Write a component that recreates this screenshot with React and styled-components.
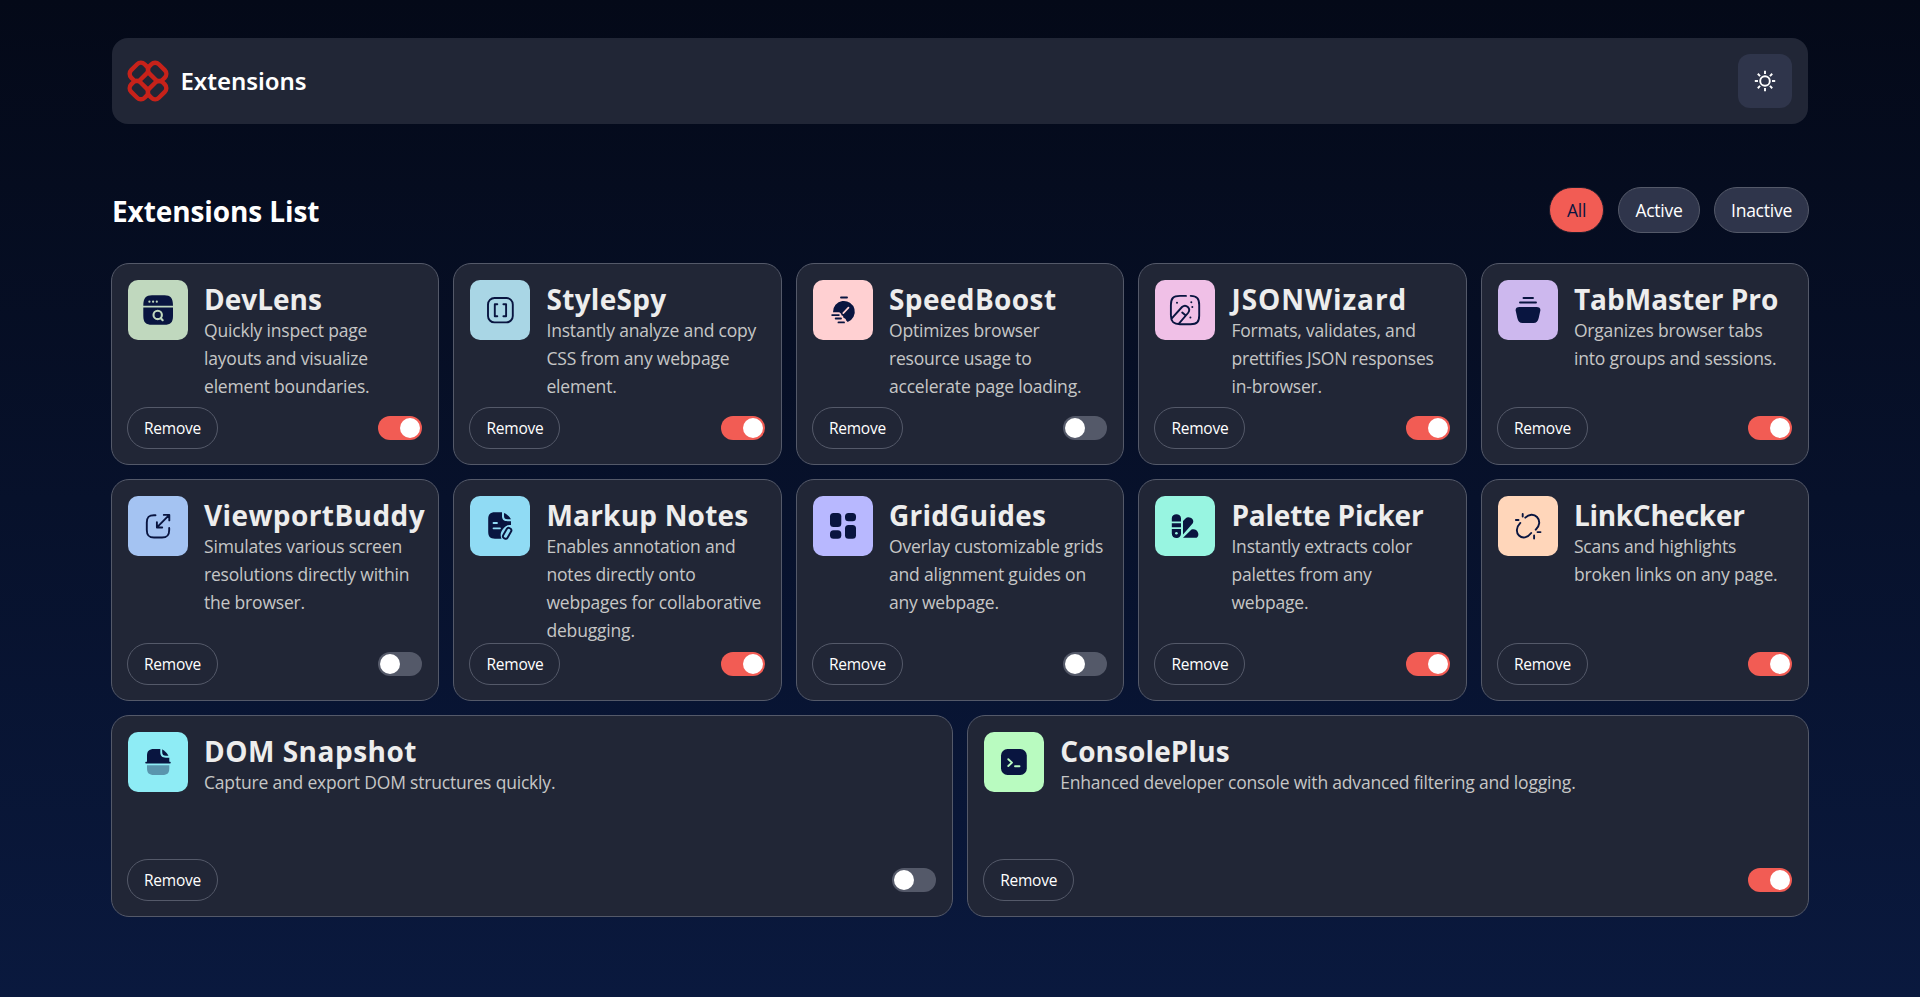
import React, { useState } from "react";
import styled, { createGlobalStyle } from "styled-components";

const NAVY = "#091540";

const GlobalStyle = createGlobalStyle`
  * { box-sizing: border-box; margin: 0; padding: 0; }
  body {
    min-height: 997px;
    background: linear-gradient(180deg, #040918 0%, #0a193e 100%);
    font-family: "Segoe UI", "Open Sans", "Noto Sans", sans-serif;
    color: #fff;
  }
`;

const Page = styled.main`
  min-height: 997px;
  padding: 38px 111px 0;
`;

const Header = styled.header`
  display: flex;
  align-items: center;
  justify-content: space-between;
  height: 86px;
  margin: 0 1px;
  padding: 16px;
  border-radius: 16px;
  background: #212636;
`;

const Brand = styled.div`
  display: flex;
  align-items: center;
  gap: 12px;
`;

const BrandName = styled.span`
  font: 600 24px/40px "Noto Sans", sans-serif;
  letter-spacing: -0.05px;
`;

const ThemeButton = styled.button`
  display: grid;
  place-items: center;
  width: 54px;
  height: 54px;
  border: 0;
  border-radius: 12px;
  background: #2f354b;
`;

const Toolbar = styled.section`
  display: flex;
  align-items: center;
  justify-content: space-between;
  height: 46px;
  margin: 63px 0 30px;
`;

const PageTitle = styled.h1`
  padding: 2px 0 0 1px;
  font-size: 28px;
  line-height: 46px;
  font-weight: 700;
  letter-spacing: -0.1px;
  white-space: nowrap;
`;

const Filters = styled.div`
  display: flex;
  align-items: center;
  gap: 14px;
`;

const FilterButton = styled.button`
  width: ${(p) => p.$width}px;
  height: 46px;
  border: 1px solid ${(p) => (p.$selected ? "#1d1c2c" : "#545969")};
  border-radius: 23px;
  background: ${(p) => (p.$selected ? "#f25c54" : "#2f354b")};
  color: ${(p) => (p.$selected ? NAVY : "#fff")};
  font-family: inherit;
  font-size: 17.5px;
  letter-spacing: -0.25px;
`;

const Grid = styled.section`
  display: grid;
  grid-template-columns: repeat(10, minmax(0, 1fr));
  grid-template-rows: 202px 222px 202px;
  gap: 14px 14.4px;
`;

const Card = styled.article`
  grid-column: span ${(p) => (p.$wide ? 5 : 2)};
  display: flex;
  flex-direction: column;
  justify-content: space-between;
  padding: 16px 16px 15px;
  border: 1px solid #545969;
  border-radius: 18px;
  background: #212636;
`;

const CardBody = styled.div`
  display: flex;
  gap: 16px;
  height: 126px;
`;

const IconTile = styled.svg`
  flex: none;
  width: 60px;
  height: 60px;
  border-radius: 10px;
  background: ${(p) => p.$color};
`;

const CardTitle = styled.h2`
  height: 36px;
  font-size: 28px;
  line-height: 38px;
  font-weight: 700;
  letter-spacing: ${(p) => p.$tracking}px;
  color: #ededed;
  white-space: nowrap;
`;

const Description = styled.p`
  font-size: 17.5px;
  line-height: 28px;
  letter-spacing: -0.19px;
  color: #c6c6c6;
  white-space: pre;
`;

const CardFooter = styled.div`
  display: flex;
  align-items: center;
  justify-content: space-between;
  height: 42px;
  margin-left: -1px;
`;

const RemoveButton = styled.button`
  width: 91px;
  height: 42px;
  border: 1px solid #545969;
  border-radius: 21px;
  background: transparent;
  color: #fff;
  font-family: inherit;
  font-size: 15.5px;
  letter-spacing: -0.25px;
`;

const Switch = styled.button`
  display: flex;
  align-items: center;
  justify-content: ${(p) => (p.$on ? "flex-end" : "flex-start")};
  width: 44px;
  height: 24px;
  padding: 2px;
  border: 0;
  border-radius: 12px;
  background: ${(p) => (p.$on ? "#f25c54" : "#545969")};
`;

const Knob = styled.span`
  width: 20px;
  height: 20px;
  border-radius: 50%;
  background: #fff;
`;

const LogoMark = styled.svg`
  flex: none;
  width: 42px;
  height: 42px;
  margin: 0 -0.5px 0 -1px;
`;

const Logo = () => (
  <LogoMark viewBox="0 0 40 40" fill="none" stroke="#c7221a" strokeWidth="4.2">
    {[0, 90, 180, 270].map((a) => (
      <g key={a} transform={`rotate(${a} 20 20)`}>
        <rect x="2.3" y="5" width="18" height="12.6" rx="5" transform="rotate(-45 11.3 11.3)" />
      </g>
    ))}
  </LogoMark>
);

const Sun = () => (
  <svg width="22" height="22" viewBox="-11 -11 22 22" fill="none" stroke="#fff" strokeWidth="1.9">
    <circle r="4.8" />
    {[0, 45, 90, 135, 180, 225, 270, 315].map((a) => (
      <path key={a} d="M0 -7V-10.2" transform={`rotate(${a})`} />
    ))}
  </svg>
);

const line = { fill: "none", stroke: NAVY, strokeWidth: 1.9, strokeLinecap: "round", strokeLinejoin: "round" };

const extensions = [
  {
    name: "DevLens", tracking: 0, text: "Quickly inspect page\nlayouts and visualize\nelement boundaries.", color: "#c0d8be", on: true,
    icon: (
      <>
        <path fill={NAVY} d="M15.3 25.7C15.3 18 18 15.2 24 15.2h12.5c6 0 8.5 2.8 8.5 10.5zM15.3 27.4H45V36c0 6.5-2.5 8.8-8.5 8.8H24c-6 0-8.7-2.3-8.7-8.8z" />
        <g fill="#c0d8be"><circle cx="21.4" cy="21.7" r="1.1" /><circle cx="25.1" cy="21.7" r="1.1" /><circle cx="28.8" cy="21.7" r="1.1" /></g>
        <g fill="none" stroke="#c0d8be" strokeWidth="2.1" strokeLinecap="round"><circle cx="29.7" cy="34.9" r="4.2" /><path d="M32.8 38.2L34.7 40.2" /></g>
      </>
    ),
  },
  {
    name: "StyleSpy", tracking: 0.3, text: "Instantly analyze and copy\nCSS from any webpage\nelement.", color: "#a9d6e5", on: true,
    icon: (
      <g {...line}>
        <rect x="18" y="18" width="24.8" height="24.4" rx="6.5" />
        <path d="M27.3 24.3H24.8V36.3H27.3M33.4 24.3H36.1V36.3H33.4" />
      </g>
    ),
  },
  {
    name: "SpeedBoost", tracking: 0.4, text: "Optimizes browser\nresource usage to\naccelerate page loading.", color: "#ffd0d2", on: false,
    icon: (
      <>
        <path fill={NAVY} d="M20 32.2A10.9 10.9 0 1 1 34.7 42L33 40.2C33 39 32 38 30.6 38C30.5 36.5 29.5 35.5 28.5 35.3C28.5 33.5 27 32.2 25.8 32.2z" />
        <path d="M30.3 33.2L35.5 27.7" stroke="#ffd0d2" strokeWidth="1.7" strokeLinecap="round" />
        <path {...line} d="M28 17.5H34M19.2 35.1H25.8M22.7 38.5H28M25.5 42.4H31" />
      </>
    ),
  },
  {
    name: "JSONWizard", tracking: 0.95, text: "Formats, validates, and\nprettifies JSON responses\nin-browser.", color: "#f0c0e7", on: true,
    icon: (
      <>
        <g {...line}>
          <path d="M31 15.9H25C18 15.9 15.9 18.5 15.9 25V35.5C15.9 42 18.5 44.2 25 44.2H35.5C42 44.2 44.2 42 44.2 35.5V25C44.2 18.5 42 16.2 35.7 15.9" />
          <path d="M16.8 38.3L27 27C31 23.5 36.5 28.5 33 33L23.7 43.8M27.2 32.5L30.5 35.3" />
        </g>
        <g fill={NAVY}><circle cx="22" cy="22.7" r="1" /><circle cx="36.3" cy="22.3" r="1" /><circle cx="37.3" cy="27" r="1" /><circle cx="35.4" cy="37.4" r="1" /></g>
      </>
    ),
  },
  {
    name: "TabMaster Pro", tracking: 0, text: "Organizes browser tabs\ninto groups and sessions.", color: "#cdb8ee", on: true,
    icon: (
      <>
        <path {...line} d="M25.5 18H35M22 22.5H38" />
        <path fill={NAVY} d="M21.5 27H38.5C41.5 27 42.7 28.3 42.3 30.8L40.7 38C39.8 41.5 38.5 43 35.5 43H24.5C21.5 43 20.2 41.5 19.3 38L17.7 30.8C17.3 28.3 18.5 27 21.5 27z" />
      </>
    ),
  },
  {
    name: "ViewportBuddy", tracking: 0.4, text: "Simulates various screen\nresolutions directly within\nthe browser.", color: "#a4c3f2", on: false,
    icon: (
      <g {...line}>
        <path d="M27.5 19.2H26C20.5 19.2 18.8 21.5 18.8 26.5V34C18.8 39.5 20.8 41.5 26 41.5H34C39.2 41.5 41.2 39.5 41.2 34V32" />
        <path d="M29.2 31.2L41.3 18.9M35.8 18.9H41.3V24.4M28.9 26.2V31.5H34.2" />
      </g>
    ),
  },
  {
    name: "Markup Notes", tracking: 0.2, text: "Enables annotation and\nnotes directly onto\nwebpages for collaborative\ndebugging.", color: "#90dbf4", on: true,
    icon: (
      <>
        <path fill={NAVY} d="M25 16.2H32V20C32 23.5 34 25.2 37.5 25.2H41V29C37 28.5 35 30.5 33 33C30.5 36 30 39.5 31.5 42.7H25C20 42.7 18.2 40.5 18.2 35.5V23.5C18.2 18.5 20 16.2 25 16.2z" />
        <path fill={NAVY} d="M34 17V20C34 22.3 35 23.3 37.5 23.3H41C39.5 20.5 37 18.2 34 17z" />
        <path stroke="#90dbf4" strokeWidth="1.8" strokeLinecap="round" d="M23.5 27H27M23.5 32.3H30" />
        <rect {...line} x="34.7" y="31.6" width="5" height="11.5" rx="2.2" transform="rotate(30 37.2 37.2)" />
      </>
    ),
  },
  {
    name: "GridGuides", tracking: 0.25, text: "Overlay customizable grids\nand alignment guides on\nany webpage.", color: "#b8b8ff", on: false,
    icon: (
      <g fill={NAVY}>
        <rect x="17" y="17" width="11.3" height="14" rx="3.5" /><rect x="32" y="17" width="11" height="8.3" rx="3.5" />
        <rect x="17" y="34.3" width="11.3" height="8.5" rx="3.5" /><rect x="32" y="29" width="11" height="13.8" rx="3.5" />
      </g>
    ),
  },
  {
    name: "Palette Picker", tracking: -0.2, text: "Instantly extracts color\npalettes from any\nwebpage.", color: "#98f5e1", on: true,
    icon: (
      <g fill={NAVY}>
        <path d="M16.8 25.5V22.3C16.8 16.8 26 16.8 26 22.3V25.5zM16.8 27.2H26V31.2H16.8zM16.8 33H26V37.4C26 43.5 16.8 43.5 16.8 37.4z" />
        <path d="M28 38.5V25L30.5 22.5C33.5 19.3 40.3 23.3 37.8 27.3zM28 41.7L36.5 33.5C41.5 31.5 45.5 38 42.2 41.2Q41.5 41.8 40.5 41.7z" />
        <circle cx="21.4" cy="37.3" r="1.3" fill="#98f5e1" />
      </g>
    ),
  },
  {
    name: "LinkChecker", tracking: -0.3, text: "Scans and highlights\nbroken links on any page.", color: "#ffd6ba", on: true,
    icon: (
      <g {...line}>
        <path d="M27.3 21.7C31 18 36 17.8 39 21C42.4 24.6 41.8 30 37.7 33.7M22.3 26.9C18 31.5 18 36.5 21 39.5C24.5 42.9 29.5 42 33.2 37" />
        <path d="M24.7 18V20.5M17.9 24H20.5M39.5 36.1H42.5M36.1 39.5V42.5" />
      </g>
    ),
  },
  {
    name: "DOM Snapshot", tracking: 0.5, text: "Capture and export DOM structures quickly.", color: "#8eecf5", on: false, wide: true,
    icon: (
      <g fill={NAVY}>
        <path d="M18 29.8H19V24C19 19 21 17 26 17H32.3V20C32.3 24 34 25.7 38 25.7H41.3V29.8H42C43 29.8 43 31.5 42 31.5H18C17 31.5 17 29.8 18 29.8z" />
        <path d="M34.2 17.2V20C34.2 22.7 35.3 23.8 38 23.8H40.5C39 21 36.5 18.5 34.2 17.2z" />
        <path opacity=".4" d="M19 33.3H41.3V36C41.3 41 39.5 43 34.5 43H26C21 43 19 41 19 36z" />
      </g>
    ),
  },
  {
    name: "ConsolePlus", tracking: 0.1, text: "Enhanced developer console with advanced filtering and logging.", color: "#b9fbc0", on: true, wide: true,
    icon: (
      <>
        <rect x="17" y="17" width="25.8" height="26" rx="6.5" fill={NAVY} />
        <path d="M24.3 27.2L28 30.6L24.3 34M31 34.3H35.5" fill="none" stroke="#b9fbc0" strokeWidth="1.9" strokeLinecap="round" strokeLinejoin="round" />
      </>
    ),
  },
];

const filters = [["All", 55], ["Active", 82], ["Inactive", 95]];

function ExtensionCard({ item, on, onToggle }) {
  return (
    <Card $wide={item.wide}>
      <CardBody>
        <IconTile viewBox="0 0 60 60" $color={item.color}>{item.icon}</IconTile>
        <div>
          <CardTitle $tracking={item.tracking}>{item.name}</CardTitle>
          <Description>{item.text}</Description>
        </div>
      </CardBody>
      <CardFooter>
        <RemoveButton>Remove</RemoveButton>
        <Switch $on={on} onClick={onToggle} role="switch" aria-checked={on}><Knob /></Switch>
      </CardFooter>
    </Card>
  );
}

export default function App() {
  const [filter, setFilter] = useState("All");
  const [active, setActive] = useState(() => extensions.map((e) => e.on));
  return (
    <Page>
      <GlobalStyle />
      <Header>
        <Brand><Logo /><BrandName>Extensions</BrandName></Brand>
        <ThemeButton><Sun /></ThemeButton>
      </Header>
      <Toolbar>
        <PageTitle>Extensions List</PageTitle>
        <Filters>
          {filters.map(([name, width]) => (
            <FilterButton key={name} $width={width} $selected={filter === name} onClick={() => setFilter(name)}>{name}</FilterButton>
          ))}
        </Filters>
      </Toolbar>
      <Grid>
        {extensions.map((item, i) =>
          filter === "All" || (filter === "Active") === active[i] ? (
            <ExtensionCard key={item.name} item={item} on={active[i]} onToggle={() => setActive(active.map((v, j) => (j === i ? !v : v)))} />
          ) : null
        )}
      </Grid>
    </Page>
  );
}
